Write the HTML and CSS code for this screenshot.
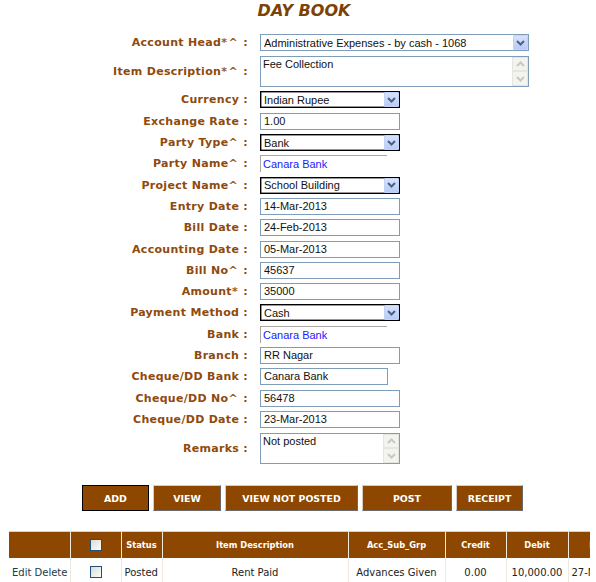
FILE: index.html
```html
<!DOCTYPE html>
<html>
<head>
<meta charset="utf-8">
<title>Day Book</title>
<link rel="stylesheet" href="styles.css">
</head>
<body>
<div class="page">
  <h1 class="title">DAY BOOK</h1>

  <div class="form">
    <div class="row">
      <span class="lbl">Account Head<span class="mk">*^</span> :</span>
      <div class="sel sel-blue w-wide"><span class="sel-text">Administrative Expenses - by cash - 1068</span><span class="sel-btn"><svg width="9" height="6" viewBox="0 0 9 6"><path d="M1 1 L4.5 4.5 L8 1" stroke="#4d6185" stroke-width="2" fill="none"/></svg></span></div>
    </div>
    <div class="row row-tall">
      <span class="lbl">Item Description<span class="mk">*^</span> :</span>
      <div class="ta w-wide"><span class="ta-text">Fee Collection</span><span class="ta-bar"><span class="ta-btn"><svg width="9" height="6" viewBox="0 0 9 6"><path d="M1 5 L4.5 1.5 L8 5" stroke="#c9c9c2" stroke-width="2" fill="none"/></svg></span><span class="ta-btn"><svg width="9" height="6" viewBox="0 0 9 6"><path d="M1 1 L4.5 4.5 L8 1" stroke="#c9c9c2" stroke-width="2" fill="none"/></svg></span></span></div>
    </div>
    <div class="row">
      <span class="lbl">Currency :</span>
      <div class="sel sel-black w-std"><span class="sel-text">Indian Rupee</span><span class="sel-btn"><svg width="9" height="6" viewBox="0 0 9 6"><path d="M1 1 L4.5 4.5 L8 1" stroke="#4d6185" stroke-width="2" fill="none"/></svg></span></div>
    </div>
    <div class="row">
      <span class="lbl">Exchange Rate :</span>
      <div class="inp w-std">1.00</div>
    </div>
    <div class="row">
      <span class="lbl">Party Type<span class="mk">^</span> :</span>
      <div class="sel sel-black w-std"><span class="sel-text">Bank</span><span class="sel-btn"><svg width="9" height="6" viewBox="0 0 9 6"><path d="M1 1 L4.5 4.5 L8 1" stroke="#4d6185" stroke-width="2" fill="none"/></svg></span></div>
    </div>
    <div class="row">
      <span class="lbl">Party Name<span class="mk">^</span> :</span>
      <div class="ro">Canara Bank</div>
    </div>
    <div class="row">
      <span class="lbl">Project Name<span class="mk">^</span> :</span>
      <div class="sel sel-black w-std"><span class="sel-text">School Building</span><span class="sel-btn"><svg width="9" height="6" viewBox="0 0 9 6"><path d="M1 1 L4.5 4.5 L8 1" stroke="#4d6185" stroke-width="2" fill="none"/></svg></span></div>
    </div>
    <div class="row">
      <span class="lbl">Entry Date :</span>
      <div class="inp w-std">14-Mar-2013</div>
    </div>
    <div class="row">
      <span class="lbl">Bill Date :</span>
      <div class="inp w-std">24-Feb-2013</div>
    </div>
    <div class="row">
      <span class="lbl">Accounting Date :</span>
      <div class="inp w-std">05-Mar-2013</div>
    </div>
    <div class="row">
      <span class="lbl">Bill No<span class="mk">^</span> :</span>
      <div class="inp w-std">45637</div>
    </div>
    <div class="row">
      <span class="lbl">Amount<span class="mk">*</span> :</span>
      <div class="inp w-std">35000</div>
    </div>
    <div class="row">
      <span class="lbl">Payment Method :</span>
      <div class="sel sel-black w-std"><span class="sel-text">Cash</span><span class="sel-btn"><svg width="9" height="6" viewBox="0 0 9 6"><path d="M1 1 L4.5 4.5 L8 1" stroke="#4d6185" stroke-width="2" fill="none"/></svg></span></div>
    </div>
    <div class="row">
      <span class="lbl">Bank :</span>
      <div class="ro">Canara Bank</div>
    </div>
    <div class="row">
      <span class="lbl">Branch :</span>
      <div class="inp w-std">RR Nagar</div>
    </div>
    <div class="row">
      <span class="lbl">Cheque/DD Bank :</span>
      <div class="inp w-short">Canara Bank</div>
    </div>
    <div class="row">
      <span class="lbl">Cheque/DD No<span class="mk">^</span> :</span>
      <div class="inp w-std">56478</div>
    </div>
    <div class="row">
      <span class="lbl">Cheque/DD Date :</span>
      <div class="inp w-std">23-Mar-2013</div>
    </div>
    <div class="row row-tall2">
      <span class="lbl">Remarks :</span>
      <div class="ta w-std"><span class="ta-text">Not posted</span><span class="ta-bar"><span class="ta-btn"><svg width="9" height="6" viewBox="0 0 9 6"><path d="M1 5 L4.5 1.5 L8 5" stroke="#c9c9c2" stroke-width="2" fill="none"/></svg></span><span class="ta-btn"><svg width="9" height="6" viewBox="0 0 9 6"><path d="M1 1 L4.5 4.5 L8 1" stroke="#c9c9c2" stroke-width="2" fill="none"/></svg></span></span></div>
    </div>
  </div>

  <div class="buttons">
    <button class="btn btn-focus b-add">ADD</button>
    <button class="btn b-view">VIEW</button>
    <button class="btn b-vnp">VIEW NOT POSTED</button>
    <button class="btn b-post">POST</button>
    <button class="btn b-receipt">RECEIPT</button>
  </div>

  <div class="table-wrap">
    <table class="grid">
      <colgroup>
        <col class="c1"><col class="c2"><col class="c3"><col class="c4"><col class="c5"><col class="c6"><col class="c7"><col class="c8">
      </colgroup>
      <thead>
        <tr>
          <th></th>
          <th><span class="cb"></span></th>
          <th>Status</th>
          <th>Item Description</th>
          <th>Acc_Sub_Grp</th>
          <th>Credit</th>
          <th>Debit</th>
          <th>Date</th>
        </tr>
      </thead>
      <tbody>
        <tr>
          <td class="left links"><a>Edit</a> <a>Delete</a></td>
          <td><span class="cb"></span></td>
          <td class="left">Posted</td>
          <td>Rent Paid</td>
          <td>Advances Given</td>
          <td>0.00</td>
          <td>10,000.00</td>
          <td class="left">27-Mar-2013</td>
        </tr>
      </tbody>
    </table>
  </div>
</div>
</body>
</html>
```

FILE: styles.css
```css
html, body {
  margin: 0;
  padding: 0;
  overflow: hidden;
  background: #fff;
}

.page {
  width: 596px;
}

.title {
  margin: 0 0 12.35px 12px;
  height: 21px;
  line-height: 22px;
  text-align: center;
  font-family: "DejaVu Sans", Verdana, sans-serif;
  font-size: 16px;
  font-weight: bold;
  font-style: italic;
  color: #7b4305;
}

.form {
  display: flex;
  flex-direction: column;
  margin-top: -1px;
}

.row {
  display: flex;
  align-items: center;
  height: 21.3px;
}

.row-tall {
  height: 35.7px;
}

.row-tall2 {
  height: 36.4px;
}

.lbl {
  width: 248px;
  margin-right: 12px;
  text-align: right;
  font-family: "DejaVu Sans", Verdana, sans-serif;
  font-size: 11px;
  font-weight: bold;
  letter-spacing: 0.3px;
  color: #8f4a0c;
  white-space: nowrap;
}

.mk {
  letter-spacing: 1.5px;
  color: #9a5a22;
}

.w-wide { width: 269px; }
.w-std { width: 140px; }
.w-short { width: 128px; }

.inp, .sel, .ta, .ro {
  box-sizing: border-box;
  font-family: "Liberation Sans", Arial, sans-serif;
  font-size: 11px;
  color: #111;
  background: #fff;
}

.inp {
  height: 17px;
  line-height: 15px;
  border: 1px solid #7f9db9;
  padding: 0 3px;
}

.sel {
  height: 17px;
  display: flex;
  align-items: center;
  padding-left: 3px;
}

.sel-blue {
  border: 1px solid #7f9db9;
}

.sel-black {
  border: 1px solid #000;
  box-shadow: inset 0 0 0 0.5px #333;
}

.sel-text {
  flex: 1;
  white-space: nowrap;
  overflow: hidden;
}

.sel-btn {
  box-sizing: border-box;
  width: 15px;
  height: 15px;
  display: flex;
  align-items: center;
  justify-content: center;
  background: linear-gradient(#d6e2fd, #b8cbf6);
  border: 1px solid #c3d3f7;
  border-radius: 1px;
}

.ro {
  width: 127px;
  height: 17px;
  line-height: 16px;
  border-top: 1px solid #a8a7a3;
  border-left: 1px solid #a8a7a3;
  padding-left: 2px;
  color: #1a1aff;
}

.ta {
  height: 31px;
  display: flex;
  border: 1px solid #7f9db9;
}

.ta-text {
  flex: 1;
  padding: 1px 2px;
  line-height: 13px;
}

.ta-bar {
  width: 16px;
  display: flex;
  flex-direction: column;
  justify-content: space-between;
  background: #f7f7f3;
}

.ta-btn {
  box-sizing: border-box;
  height: 14.5px;
  display: flex;
  align-items: center;
  justify-content: center;
  background: #f3f3ef;
  border: 1px solid #e6e6e0;
}

.buttons {
  display: flex;
  gap: 4px;
  padding: 19px 0 0 82px;
}

.btn {
  box-sizing: border-box;
  height: 26px;
  padding: 0;
  background: #8e4700;
  color: #fff;
  font-family: "DejaVu Sans", Verdana, sans-serif;
  font-size: 9.4px;
  font-weight: bold;
  border: 1px solid;
  border-color: #d9cbbd #6a6a6a #6a6a6a #d9cbbd;
}

.btn-focus {
  border: 1px solid #000;
  box-shadow: inset 0 0 0 1px #8e4700;
}

.b-add { width: 67px; }
.b-view { width: 68px; }
.b-vnp { width: 133px; }
.b-post { width: 90px; }
.b-receipt { width: 67px; }

.table-wrap {
  margin-top: 20px;
  width: 590px;
  overflow: hidden;
}

.grid {
  margin-left: 9px;
  table-layout: fixed;
  width: 623px;
  border-collapse: collapse;
  font-family: "DejaVu Sans", Verdana, sans-serif;
}

.c1 { width: 61px; }
.c2 { width: 51px; }
.c3 { width: 41px; }
.c4 { width: 186px; }
.c5 { width: 97px; }
.c6 { width: 61px; }
.c7 { width: 62px; }
.c8 { width: 64px; }

.grid th {
  height: 26px;
  padding: 0;
  background: #8e4700;
  color: #fff;
  font-size: 8.3px;
  font-weight: bold;
  text-align: center;
  border-top: 1px solid #d8d2cc;
  border-left: 1px solid #efe8dc;
  white-space: nowrap;
  overflow: hidden;
}

.grid th:first-child,
.grid td:first-child {
  border-left: none;
}

.grid td {
  height: 28px;
  padding: 0;
  font-size: 10px;
  color: #222;
  text-align: center;
  border-left: 1px solid #efe8dc;
  white-space: nowrap;
  overflow: hidden;
}

.grid th.left, .grid td.left {
  text-align: left;
  padding-left: 3px;
}

.links a {
  color: #1d3a48;
}

.cb {
  display: inline-block;
  box-sizing: border-box;
  width: 12px;
  height: 12px;
  border: 1px solid #1c5180;
  background: linear-gradient(135deg, #dcdcd6, #fbfbf9);
  vertical-align: middle;
}
```
